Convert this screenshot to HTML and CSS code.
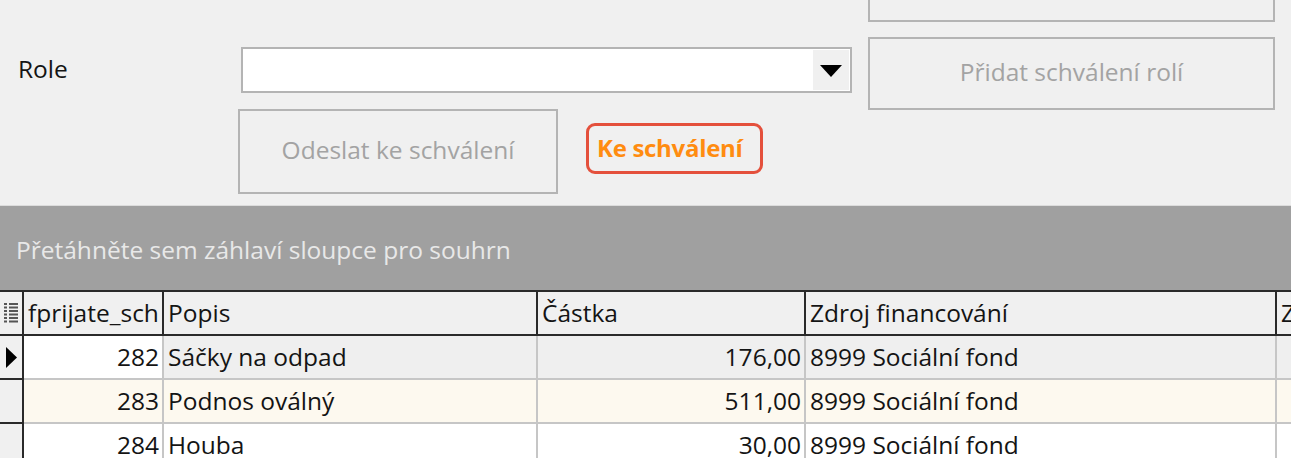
FILE: index.html
```html
<!DOCTYPE html>
<html lang="cs">
<head>
<meta charset="utf-8">
<title>Schválení</title>
<link rel="stylesheet" href="styles.css">
</head>
<body>
<div class="form">
  <div class="top">
    <div class="left">
      <div class="role-row">
        <label class="role-label">Role</label>
        <div class="combo">
          <div class="combo-text"></div>
          <div class="combo-btn">
            <svg width="22" height="12" viewBox="0 0 22 12"><polygon points="0,0 22,0 11,12" fill="#000"/></svg>
          </div>
        </div>
      </div>
      <div class="actions-row">
        <button class="btn btn-send" disabled>Odeslat ke schválení</button>
        <div class="status">Ke schválení</div>
      </div>
    </div>
    <div class="right">
      <button class="btn btn-top" disabled></button>
      <button class="btn btn-add" disabled>Přidat schválení rolí</button>
    </div>
  </div>

  <div class="group-bar">Přetáhněte sem záhlaví sloupce pro souhrn</div>

  <table class="grid">
    <colgroup>
      <col class="c-ind"><col class="c-id"><col class="c-popis"><col class="c-castka"><col class="c-zdroj"><col class="c-z">
    </colgroup>
    <thead>
      <tr>
        <th class="ind">
          <svg width="14" height="20" viewBox="0 0 14 20">
            <g fill="#555">
              <rect x="0" y="0" width="3" height="2"/><rect x="5" y="0" width="9" height="2"/>
              <rect x="0" y="3.5" width="3" height="2"/><rect x="5" y="3.5" width="9" height="2"/>
              <rect x="0" y="7" width="3" height="2"/><rect x="5" y="7" width="9" height="2"/>
              <rect x="0" y="10.5" width="3" height="2"/><rect x="5" y="10.5" width="9" height="2"/>
              <rect x="0" y="14" width="3" height="2"/><rect x="5" y="14" width="9" height="2"/>
              <rect x="0" y="17.5" width="3" height="2"/><rect x="5" y="17.5" width="9" height="2"/>
            </g>
          </svg>
        </th>
        <th>fprijate_sch</th>
        <th>Popis</th>
        <th>Částka</th>
        <th>Zdroj financování</th>
        <th>Z</th>
      </tr>
    </thead>
    <tbody>
      <tr class="row-sel">
        <td class="ind"><svg width="11" height="21" viewBox="0 0 11 21"><polygon points="0,0 11,10.5 0,21" fill="#000"/></svg></td>
        <td class="num focus">282</td>
        <td>Sáčky na odpad</td>
        <td class="num">176,00</td>
        <td>8999 Sociální fond</td>
        <td></td>
      </tr>
      <tr class="row-alt">
        <td class="ind"></td>
        <td class="num">283</td>
        <td>Podnos oválný</td>
        <td class="num">511,00</td>
        <td>8999 Sociální fond</td>
        <td></td>
      </tr>
      <tr class="row-plain">
        <td class="ind"></td>
        <td class="num">284</td>
        <td>Houba</td>
        <td class="num">30,00</td>
        <td>8999 Sociální fond</td>
        <td></td>
      </tr>
    </tbody>
  </table>
</div>
</body>
</html>
```
FILE: styles.css
```css
* { box-sizing: border-box; }
html, body {
  margin: 0;
  padding: 0;
  background: #f0f0f0;
  overflow: hidden;
}
body {
  font-family: "Open Sans", "Noto Sans", "DejaVu Sans", sans-serif;
  font-size: 24.5px;
  color: #141414;
}
.form {
  width: 1291px;
  height: 458px;
  overflow: hidden;
}
.top {
  display: flex;
  height: 206px;
  border-bottom: 1px solid #dcdcdc;
}
.left {
  width: 868px;
}
.role-row {
  display: flex;
  align-items: center;
  margin-top: 47px;
}
.role-label {
  width: 241px;
  padding-left: 18px;
  padding-bottom: 3px;
  color: #141414;
}
.combo {
  display: flex;
  width: 611px;
  height: 46px;
  border: 2px solid #b4b4b4;
  background: #fff;
  padding: 1px;
}
.combo-text { flex: 1; }
.combo-btn {
  width: 36px;
  display: flex;
  align-items: center;
  justify-content: center;
  background: #f0f0f0;
}
.combo-btn svg { margin-top: 1px; }
.actions-row {
  display: flex;
  align-items: center;
  padding-left: 238px;
  margin-top: 16px;
}
.btn {
  font-family: inherit;
  font-size: 24.5px;
  color: #a3a3a3;
  background: #f0f0f0;
  border: 2px solid #b4b4b4;
  padding: 0 0 4px 0;
  margin: 0;
}
.btn-send {
  width: 320px;
  height: 85px;
}
.status {
  margin-left: 28px;
  margin-top: -6px;
  width: 177px;
  height: 51px;
  border: 3px solid #e4503c;
  border-radius: 9px;
  color: #ff8c10;
  font-weight: 700;
  font-size: 24px;
  letter-spacing: -0.3px;
  display: flex;
  align-items: center;
  padding-left: 8px;
  padding-bottom: 3px;
  white-space: nowrap;
}
.right {
  width: 407px;
  display: flex;
  flex-direction: column;
}
.btn-top {
  width: 407px;
  height: 60px;
  margin-top: -38px;
}
.btn-add {
  width: 407px;
  height: 73px;
  margin-top: 15px;
}
.group-bar {
  height: 84px;
  background: #a0a0a0;
  color: #e8e8e8;
  padding-left: 16px;
  display: flex;
  align-items: center;
  padding-top: 3px;
}
.grid {
  border-collapse: collapse;
  table-layout: fixed;
  width: 1300px;
}
.c-ind { width: 23px; }
.c-id { width: 140px; }
.c-popis { width: 374px; }
.c-castka { width: 268px; }
.c-zdroj { width: 471px; }
.c-z { width: 24px; }
.grid th, .grid td {
  height: 44px;
  padding: 0 4px 2px 4px;
  white-space: nowrap;
  overflow: hidden;
  font-weight: 400;
  text-align: left;
}
.grid th {
  background: #f0f0f0;
  border: 2px solid #2a2a2a;
}
.grid th:first-child { border-left: none; }
.grid th.ind { padding: 0 0 0 4px; vertical-align: middle; }
.grid td {
  border: 2px solid #c6c6c6;
  background: #efefef;
}
.grid td.ind {
  border-left: none;
  border-right: 2px solid #2a2a2a;
  border-bottom: 2px solid #2a2a2a;
  padding: 0 0 0 6px;
}
.grid td.ind svg { display: block; }
.grid td.num { text-align: right; padding-right: 3px; }
.row-sel td { background: #efefef; }
.row-sel td.focus { background: #ffffff; }
.row-alt td { background: #fdf9ef; }
.row-plain td { background: #ffffff; }
.grid tbody tr td.ind { background: #f0f0f0; }
```
